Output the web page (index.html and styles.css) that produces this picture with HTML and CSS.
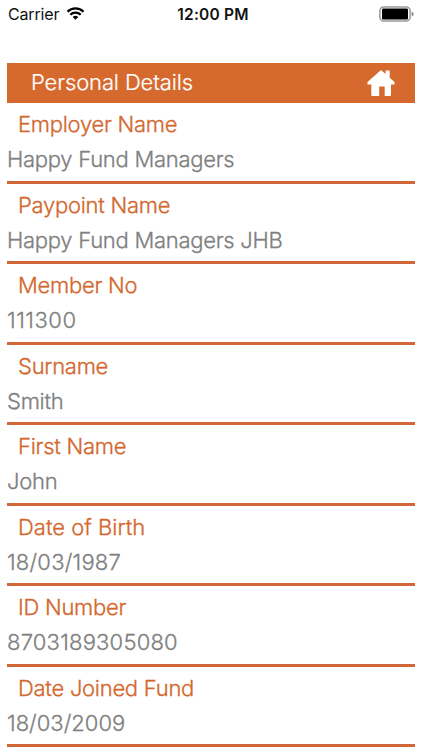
FILE: index.html
```html
<!DOCTYPE html>
<html lang="en">
<head>
<meta charset="utf-8">
<title>Personal Details</title>
<link rel="stylesheet" href="styles.css">
</head>
<body>
<header class="status">
  <div class="carrier"><span>Carrier</span>
    <svg class="wifi" viewBox="0 0 18 13"><path d="M9 12.8 6.2 10a4 4 0 0 1 5.6 0Z"/><path class="arc" d="M1 4.7a11.4 11.4 0 0 1 16 0M3.8 7.7a7.4 7.4 0 0 1 10.4 0"/></svg>
  </div>
  <div class="time">12:00 PM</div>
  <svg class="battery" viewBox="0 0 36 16"><rect class="shell" x=".9" y=".9" width="30.2" height="14.2" rx="3.8"/><rect x="3" y="2.5" width="26" height="11" rx="1.2"/><path class="cap" d="M32.7 5.5q2 .6 2 2.5t-2 2.5Z"/></svg>
</header>
<main class="page">
  <div class="title"><h1>Personal Details</h1>
    <svg class="home" viewBox="0 0 28 26"><path d="M14 0 18.5 4V.6h4.2v7.2L27.5 12v2.5H24V25q0 1-1 1h-5.3v-9.5h-5.5V26H5.3q-1 0-1-1V14.5H.5V12Z"/></svg>
  </div>
  <dl class="fields">
    <div class="field"><dt>Employer Name</dt><dd>Happy Fund Managers</dd></div>
    <div class="field"><dt>Paypoint Name</dt><dd>Happy Fund Managers JHB</dd></div>
    <div class="field"><dt>Member No</dt><dd class="digits">111300</dd></div>
    <div class="field"><dt>Surname</dt><dd>Smith</dd></div>
    <div class="field"><dt>First Name</dt><dd>John</dd></div>
    <div class="field"><dt class="wide">Date of Birth</dt><dd class="date">18/03/1987</dd></div>
    <div class="field"><dt>ID Number</dt><dd class="date">8703189305080</dd></div>
    <div class="field"><dt>Date Joined Fund</dt><dd class="wide">18/03/2009</dd></div>
  </dl>
</main>
</body>
</html>
```
FILE: styles.css
```css
* { box-sizing: border-box; margin: 0; padding: 0; }
body { height: 750px; overflow: hidden; background: #fff; font-family: Inter, "Liberation Sans", sans-serif; }
.status { display: grid; grid-template-columns: 1fr auto 1fr; align-items: center; height: 28px; padding: 0 7px 0 8px; color: #111; }
.carrier { display: flex; align-items: center; gap: 7px; font-size: 16px; letter-spacing: -.15px; }
.time { font-size: 15.5px; font-weight: 600; letter-spacing: .2px; padding-left: 3px; }
.wifi { width: 19px; height: 13px; margin-top: -1px; }
.arc { fill: none; stroke: #000; stroke-width: 2.3; }
.battery { width: 36px; height: 16px; justify-self: end; }
.shell { fill: none; stroke: #999; stroke-width: 1.5; }
.cap { fill: #888; }
.page { padding: 34.5px 7px 0; }
.title { display: flex; align-items: center; justify-content: space-between; height: 40.5px; padding: 0 20px 0 24px; background: #d66a2e; color: #fff; }
h1 { margin-top: -2px; font-size: 22px; line-height: 38px; font-weight: 300; letter-spacing: -.13px; -webkit-text-stroke: .2px currentColor; }
.home { width: 28px; height: 26px; fill: #fff; }
.field { height: 80.5px; padding-top: 4px; border-bottom: 3px solid #d2683a; font-size: 22px; font-weight: 300; letter-spacing: -.27px; -webkit-text-stroke: .3px currentColor; }
dt { padding-left: 11px; line-height: 35px; color: #d2682e; }
dd { line-height: 35px; color: #808080; }
.digits { letter-spacing: .5px; }
.date { letter-spacing: .2px; }
.wide { letter-spacing: 0; }
```
